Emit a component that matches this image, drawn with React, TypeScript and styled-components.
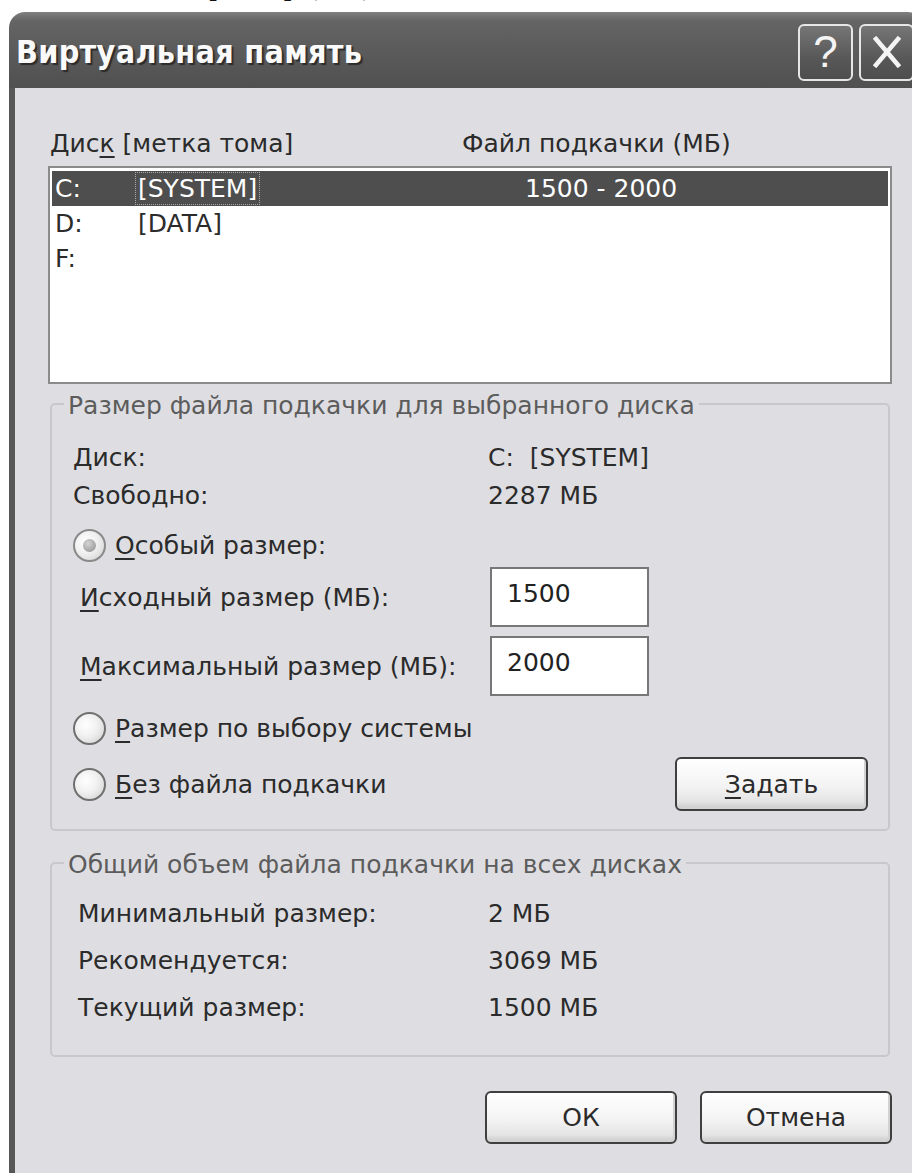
import styled, { createGlobalStyle } from "styled-components";

const GlobalStyle = createGlobalStyle`
  html, body {
    margin: 0;
    padding: 0;
    background: #fff;
  }
  body {
    font-family: "DejaVu Sans", Verdana, sans-serif;
  }
`;

const Page = styled.div`
  width: 912px;
  height: 1173px;
  overflow: hidden;
  background: #fff;
`;

// tail of the book line above the dialog, only descenders are left
const Caption = styled.div`
  height: 12px;
  overflow: hidden;
`;

const CaptionLine = styled.p`
  margin: -32px 0 0;
  padding-left: 67px;
  font: 31px/31px "Liberation Serif", "Times New Roman", serif;
  color: #111;
  white-space: nowrap;
`;

const Window = styled.div`
  margin-left: 9px;
  width: 915px;
  height: 1161px;
  display: flex;
  flex-direction: column;
`;

const TitleBar = styled.div`
  flex: none;
  height: 76px;
  box-sizing: border-box;
  display: flex;
  align-items: center;
  justify-content: space-between;
  padding: 4px 10px 0 7px;
  border-radius: 16px 16px 0 0;
  background: linear-gradient(#808080 0, #646464 12%, #5a5a5a 55%, #505050 100%);
`;

const Title = styled.h1`
  margin: 0;
  font: bold 32px "DejaVu Sans Condensed", "DejaVu Sans", sans-serif;
  letter-spacing: 0.3px;
  color: #fafafa;
  text-shadow: 2px 2px 1px #2c2c2c;
  white-space: nowrap;
`;

const Controls = styled.div`
  display: flex;
  gap: 6px;
`;

const CaptionButton = styled.div`
  width: 55px;
  height: 57px;
  box-sizing: border-box;
  display: flex;
  align-items: center;
  justify-content: center;
  border: 2px solid #e6e6e6;
  border-radius: 6px;
  background: linear-gradient(#767676, #585858 60%, #4e4e4e);
  color: #f4f4f4;
  font: 44px/1 "Liberation Sans", Arial, sans-serif;
`;

const Client = styled.div`
  flex: 1;
  background: #dedee2;
  border-left: 6px solid #575757;
  padding: 41px 0 0 33px;
  color: #2b2b2b;
  font-size: 25px;
`;

const Content = styled.div`
  width: 844px;
  display: flex;
  flex-direction: column;
`;

const Key = styled.u`
  text-decoration: underline;
  text-decoration-thickness: 2px;
  text-underline-offset: 4px;
`;

const ColumnHeads = styled.div`
  display: grid;
  grid-template-columns: 412px 1fr;
  padding-left: 2px;
  height: 30px;
  line-height: 30px;
`;

const DriveList = styled.div`
  margin-top: 7px;
  height: 218px;
  box-sizing: border-box;
  border: 2px solid #8b8b8b;
  background: #fff;
  padding: 3px 2px;
`;

const DriveRow = styled.div<{ $selected?: boolean }>`
  display: grid;
  grid-template-columns: 83px 387px 1fr;
  height: 35px;
  line-height: 35px;
  padding-left: 3px;
  background: ${(p) => (p.$selected ? "#4e4e4e" : "transparent")};
  color: ${(p) => (p.$selected ? "#fff" : "#2b2b2b")};
`;

const VolumeLabel = styled.span<{ $focused?: boolean }>`
  justify-self: start;
  margin-left: -2px;
  padding: 0 2px;
  line-height: 31px;
  align-self: center;
  outline: ${(p) => (p.$focused ? "1px dotted #a8a8a8" : "none")};
`;

const Group = styled.fieldset<{ $top: number }>`
  margin: ${(p) => p.$top}px 2px 0;
  padding: 0;
  min-width: 0;
  border: 2px solid #c8c8cc;
  border-radius: 5px;
`;

const Legend = styled.legend`
  margin-left: 12px;
  padding: 4px 4px 0;
  line-height: 28px;
  color: #5c5c5c;
`;

const GroupBody = styled.div<{ $pad: string }>`
  display: flex;
  flex-direction: column;
  padding: ${(p) => p.$pad};
`;

const InfoRow = styled.div<{ $label: number; $height: number }>`
  display: grid;
  grid-template-columns: ${(p) => p.$label}px 1fr;
  height: ${(p) => p.$height}px;
  line-height: ${(p) => p.$height}px;
  white-space: nowrap;
`;

const OptionRow = styled.div<{ $top: number; $height: number }>`
  display: flex;
  align-items: center;
  gap: 9px;
  margin-top: ${(p) => p.$top}px;
  height: ${(p) => p.$height}px;
  white-space: nowrap;
`;

const Radio = styled.span<{ $checked?: boolean }>`
  flex: none;
  width: 33px;
  height: 33px;
  box-sizing: border-box;
  display: flex;
  align-items: center;
  justify-content: center;
  border-radius: 50%;
  border: 2px solid ${(p) => (p.$checked ? "#8a8a8a" : "#707070")};
  background: radial-gradient(circle at 38% 38%, #ffffff 0, #f0f0f0 45%, #cdcdcd 100%);

  &::after {
    content: "";
    display: ${(p) => (p.$checked ? "block" : "none")};
    width: 13px;
    height: 13px;
    border-radius: 50%;
    background: radial-gradient(circle at 40% 35%, #d4d4d4, #8c8c8c);
  }
`;

const SizeRow = styled.label<{ $top: number }>`
  display: grid;
  grid-template-columns: 417px 159px;
  align-items: center;
  margin-top: ${(p) => p.$top}px;
  height: 60px;
  white-space: nowrap;

  & > span {
    padding-left: 7px;
  }
`;

const SizeInput = styled.input`
  width: 159px;
  height: 60px;
  box-sizing: border-box;
  border: 2px solid #777;
  background: #fff;
  padding: 0 0 7px 15px;
  font: 25px "DejaVu Sans", Verdana, sans-serif;
  color: #222;
  outline: none;
`;

const Spacer = styled.span`
  flex: 1;
`;

const PushButton = styled.button<{ $width: number; $height: number }>`
  flex: none;
  width: ${(p) => p.$width}px;
  height: ${(p) => p.$height}px;
  box-sizing: border-box;
  border: 2px solid #3f3f3f;
  border-radius: 6px;
  background: linear-gradient(#ffffff, #f3f3f3 55%, #e4e4e4 85%, #cacaca);
  box-shadow: inset -2px -2px 0 #d2d2d2;
  font: 25px "DejaVu Sans", Verdana, sans-serif;
  color: #2b2b2b;
  padding: 0;
`;

const Footer = styled.div`
  display: flex;
  justify-content: flex-end;
  gap: 23px;
  margin-top: 34px;
`;

const drives = [
  { letter: "C:", label: "[SYSTEM]", size: "1500 - 2000", selected: true },
  { letter: "D:", label: "[DATA]", size: "" },
  { letter: "F:", label: "", size: "" },
];

const totals = [
  ["Минимальный размер:", "2 МБ"],
  ["Рекомендуется:", "3069 МБ"],
  ["Текущий размер:", "1500 МБ"],
];

const CloseGlyph = () => (
  <svg width="28" height="32" viewBox="0 0 28 32">
    <path d="M3 3 L25 29 M25 3 L3 29" stroke="#f4f4f4" strokeWidth="4.5" strokeLinecap="square" />
  </svg>
);

export default function App() {
  return (
    <Page>
      <GlobalStyle />
      <Caption>
        <CaptionLine>Исходный размер (МБ)</CaptionLine>
      </Caption>
      <Window>
        <TitleBar>
          <Title>Виртуальная память</Title>
          <Controls>
            <CaptionButton>?</CaptionButton>
            <CaptionButton>
              <CloseGlyph />
            </CaptionButton>
          </Controls>
        </TitleBar>
        <Client>
          <Content>
            <ColumnHeads>
              <span>
                Дис<Key>к</Key> [метка тома]
              </span>
              <span>Файл подкачки (МБ)</span>
            </ColumnHeads>
            <DriveList>
              {drives.map((d) => (
                <DriveRow key={d.letter} $selected={d.selected}>
                  <span>{d.letter}</span>
                  <VolumeLabel $focused={d.selected}>{d.label}</VolumeLabel>
                  <span>{d.size}</span>
                </DriveRow>
              ))}
            </DriveList>

            <Group $top={4}>
              <Legend>Размер файла подкачки для выбранного диска</Legend>
              <GroupBody $pad="19px 20px 18px 21px">
                <InfoRow $label={415} $height={38}>
                  <span>Диск:</span>
                  <span>C:&nbsp; [SYSTEM]</span>
                </InfoRow>
                <InfoRow $label={415} $height={38}>
                  <span>Свободно:</span>
                  <span>2287 МБ</span>
                </InfoRow>
                <OptionRow $top={8} $height={44}>
                  <Radio $checked />
                  <span>
                    <Key>О</Key>собый размер:
                  </span>
                </OptionRow>
                <SizeRow $top={0}>
                  <span>
                    <Key>И</Key>сходный размер (МБ):
                  </span>
                  <SizeInput readOnly defaultValue="1500" />
                </SizeRow>
                <SizeRow $top={9}>
                  <span>
                    <Key>М</Key>аксимальный размер (МБ):
                  </span>
                  <SizeInput readOnly defaultValue="2000" />
                </SizeRow>
                <OptionRow $top={10} $height={44}>
                  <Radio />
                  <span>
                    <Key>Р</Key>азмер по выбору системы
                  </span>
                </OptionRow>
                <OptionRow $top={7} $height={54}>
                  <Radio />
                  <span>
                    <Key>Б</Key>ез файла подкачки
                  </span>
                  <Spacer />
                  <PushButton $width={193} $height={54}>
                    <Key>З</Key>адать
                  </PushButton>
                </OptionRow>
              </GroupBody>
            </Group>

            <Group $top={16}>
              <Legend>Общий объем файла подкачки на всех дисках</Legend>
              <GroupBody $pad="11px 20px 24px 26px">
                {totals.map(([label, value]) => (
                  <InfoRow key={label} $label={410} $height={47}>
                    <span>{label}</span>
                    <span>{value}</span>
                  </InfoRow>
                ))}
              </GroupBody>
            </Group>

            <Footer>
              <PushButton $width={192} $height={53}>ОК</PushButton>
              <PushButton $width={192} $height={53}>Отмена</PushButton>
            </Footer>
          </Content>
        </Client>
      </Window>
    </Page>
  );
}
